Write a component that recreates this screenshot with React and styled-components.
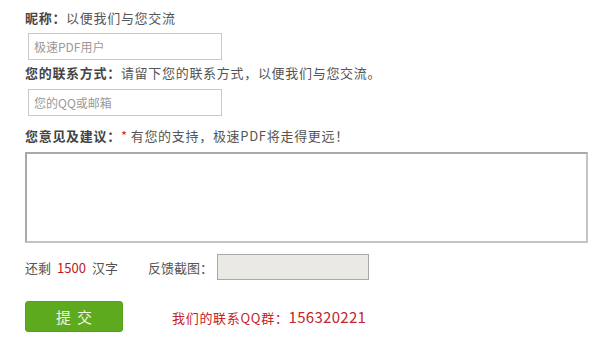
import React from "react";
import styled, { createGlobalStyle } from "styled-components";

const GlobalStyle = createGlobalStyle`
  body {
    margin: 0;
    background: #fff;
    font-family: "Noto Sans CJK SC", "Liberation Sans", sans-serif;
    font-size: 13px;
    color: #555;
  }
`;

const Form = styled.div`
  padding: 8px 0 0 25px;
  display: flex;
  flex-direction: column;
  align-items: flex-start;
`;

const Label = styled.div`
  height: 20px;
  line-height: 20px;
  margin-top: ${props => props.$mt || 0}px;
  letter-spacing: 0.7px;
  white-space: nowrap;
  b {
    color: #444;
    font-weight: bold;
  }
  .star {
    color: #d33;
    margin-right: 3px;
  }
`;

const TextInput = styled.input`
  box-sizing: border-box;
  width: 194px;
  height: 27px;
  margin: ${props => props.$mt}px 0 0 3px;
  padding: 0 5px;
  border: 1px solid #c8c8c8;
  font-family: inherit;
  font-size: 12px;
  color: #555;
  outline: none;
  &::placeholder {
    color: #999;
  }
`;

const TextArea = styled.textarea`
  box-sizing: border-box;
  width: 563px;
  height: 91px;
  margin-top: 6px;
  border: 2px solid #c4c4c4;
  border-top-color: #a9a9a9;
  border-left-color: #a9a9a9;
  resize: none;
  outline: none;
  font-family: inherit;
`;

const CountRow = styled.div`
  display: flex;
  align-items: center;
  height: 26px;
  margin-top: 11px;
  white-space: nowrap;
`;

const Count = styled.span`
  color: #b71c1c;
  margin: 0 6px 0 6px;
`;

const ShotLabel = styled.span`
  margin-left: 30px;
  margin-right: 4px;
`;

const ShotBox = styled.div`
  box-sizing: border-box;
  width: 152px;
  height: 26px;
  background: #eae9e4;
  border: 1px solid #a9a9a9;
`;

const SubmitRow = styled.div`
  display: flex;
  align-items: center;
  margin-top: 21px;
`;

const SubmitButton = styled.button`
  width: 98px;
  height: 31px;
  border: 1px solid #56a11a;
  border-radius: 3px;
  background: #5eaa1f;
  color: #eef6e4;
  font-family: inherit;
  font-size: 15px;
  letter-spacing: 6px;
  padding: 0 0 0 6px;
`;

const QQGroup = styled.span`
  margin-left: 49px;
  color: #c4242b;
  font-size: 13px;
  letter-spacing: 0.7px;
  white-space: nowrap;
  .num {
    font-size: 15px;
    letter-spacing: 0.3px;
  }
`;

export default function App() {
  return (
    <>
      <GlobalStyle />
      <Form>
        <Label>
          <b>昵称：</b>以便我们与您交流
        </Label>
        <TextInput $mt={5} placeholder="极速PDF用户" />
        <Label $mt={3}>
          <b>您的联系方式：</b>请留下您的联系方式，以便我们与您交流。
        </Label>
        <TextInput $mt={6} placeholder="您的QQ或邮箱" />
        <Label $mt={10}>
          <b>您意见及建议：</b>
          <span className="star">*</span>有您的支持，极速PDF将走得更远！
        </Label>
        <TextArea />
        <CountRow>
          还剩<Count>1500</Count>汉字
          <ShotLabel>反馈截图：</ShotLabel>
          <ShotBox />
        </CountRow>
        <SubmitRow>
          <SubmitButton>提交</SubmitButton>
          <QQGroup>
            我们的联系QQ群：<span className="num">156320221</span>
          </QQGroup>
        </SubmitRow>
      </Form>
    </>
  );
}
